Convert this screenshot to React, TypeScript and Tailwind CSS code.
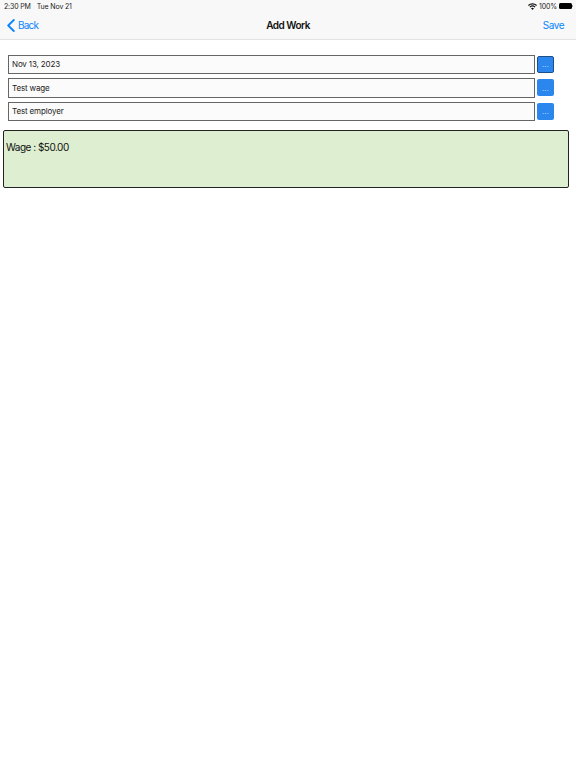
export default function App() {
  const rows = ['Nov 13, 2023', 'Test wage', 'Test employer'];

  return (
    <div className="h-[768px] bg-white text-black" style={{ fontFamily: 'Inter, "Liberation Sans", sans-serif' }}>
      {/* Nav */}
      <div className="h-10 bg-[#f8f8f8] border-b border-[#e2e2e2] flex flex-col">
        <div className="h-3 flex items-center justify-between pl-1 pr-[3px] text-[7px] leading-none tracking-[-0.15px] text-[#222]">
          <div className="flex gap-[6px]">
            <span>2:30 PM</span>
            <span>Tue Nov 21</span>
          </div>
          <div className="flex items-center gap-[2px]">
            <svg width="9" height="7" viewBox="0 0 18 14" fill="#111">
              <path d="M9 14 L6 10.6 A4.6 4.6 0 0 1 12 10.6 Z" />
              <path d="M4.6 9.1 L3 7.3 A8.8 8.8 0 0 1 15 7.3 L13.4 9.1 A6.5 6.5 0 0 0 4.6 9.1 Z" />
              <path d="M1.6 5.8 L0 4 A13 13 0 0 1 18 4 L16.4 5.8 A10.7 10.7 0 0 0 1.6 5.8 Z" />
            </svg>
            <span>100%</span>
            <div className="flex items-center">
              <div className="w-[13px] h-[6px] rounded-[1.5px] bg-black" />
              <div className="w-[1px] h-[2px] bg-[#999]" />
            </div>
          </div>
        </div>
        <div className="flex-1 relative flex items-center justify-between pl-[7px] pr-3">
          <div className="flex items-center gap-[3px] text-[#0a84ff] text-[10px] tracking-[-0.8px]">
            <svg width="8" height="13" viewBox="0 0 8 13" fill="none" stroke="#0a84ff" strokeWidth="1.8" strokeLinecap="round" strokeLinejoin="round">
              <path d="M6.8 1 L1.2 6.5 L6.8 12" />
            </svg>
            <span>Back</span>
          </div>
          <span className="absolute inset-x-0 text-center text-[10px] font-semibold tracking-[-0.5px] text-[#111]">Add Work</span>
          <span className="text-[#0a84ff] text-[10px] tracking-[-0.5px]">Save</span>
        </div>
      </div>

      {/* Form rows */}
      <div className="pt-[14.5px] pl-2 pr-[22px] flex flex-col gap-[4px]">
        {rows.map((row, i) => (
          <div key={row} className="flex items-center gap-[2px]">
            <div className="flex-1 h-[19.5px] border border-[#666] bg-[#fbfbfb] flex items-center pl-[3px] text-[8px] tracking-[-0.15px] text-[#222]">
              {row}
            </div>
            <div
              className={`w-[17px] h-[17px] rounded-[2px] bg-[#2b87ee] flex items-center justify-center pt-[2px] text-[7px] tracking-[0.4px] text-[#cfe3fb] ${
                i === 0 ? 'border border-[#1d4f8a]' : ''
              }`}
            >
              ...
            </div>
          </div>
        ))}
      </div>

      {/* Summary */}
      <div className="mt-[9px] ml-[3px] w-[566px] h-[58px] bg-[#deeed0] border-[1.5px] border-[#222] rounded-[2px] pl-[2px] pt-[9px] text-[10px] leading-[14px] tracking-[-0.5px] text-[#111]">
        Wage : $50.00
      </div>
    </div>
  );
}
